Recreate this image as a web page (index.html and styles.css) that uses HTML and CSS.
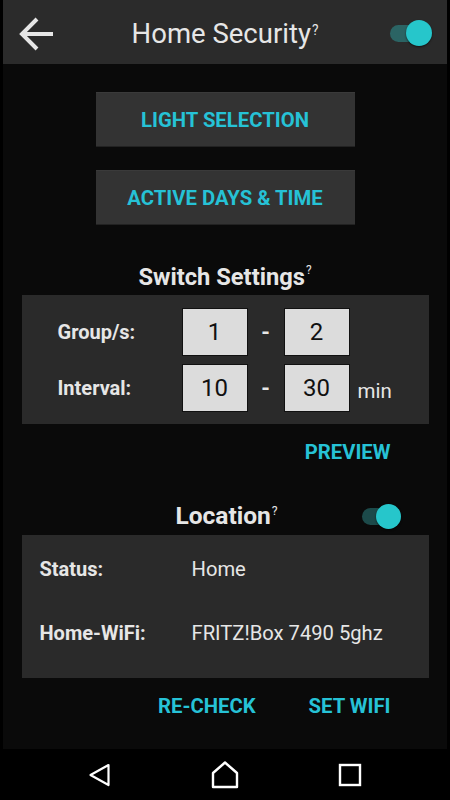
FILE: index.html
```html
<!DOCTYPE html>
<html lang="en">
<head>
    <meta charset="UTF-8">
    <meta name="viewport" content="width=device-width, initial-scale=1.0">
    <title>Home Security</title>
    <link rel="stylesheet" href="styles.css">
</head>
<body>
    <div class="screen">
        <header class="appbar">
            <svg class="back" width="36" height="36" viewBox="0 0 36 36">
                <path d="M35 18H5M19 3L4 18l15 15" fill="none" stroke="#e6e6e6" stroke-width="4"/>
            </svg>
            <h1 class="title">Home Security<sup>?</sup></h1>
            <div class="switch"><span class="thumb"></span></div>
        </header>

        <main class="content">
            <button class="tile">LIGHT SELECTION</button>
            <button class="tile">ACTIVE DAYS &amp; TIME</button>

            <h2 class="section-title">Switch Settings<sup>?</sup></h2>
            <section class="panel settings">
                <div class="row">
                    <span class="label">Group/s:</span>
                    <span class="box">1</span>
                    <span class="dash">-</span>
                    <span class="box">2</span>
                </div>
                <div class="row">
                    <span class="label">Interval:</span>
                    <span class="box">10</span>
                    <span class="dash">-</span>
                    <span class="box">30</span>
                    <span class="unit">min</span>
                </div>
            </section>
            <div class="actions">
                <a class="link">PREVIEW</a>
            </div>

            <div class="location-head">
                <h2 class="section-title">Location<sup>?</sup></h2>
                <div class="switch dim"><span class="thumb"></span></div>
            </div>
            <section class="panel location">
                <div class="info">
                    <span class="label">Status:</span>
                    <span class="value">Home</span>
                </div>
                <div class="info">
                    <span class="label">Home-WiFi:</span>
                    <span class="value">FRITZ!Box 7490 5ghz</span>
                </div>
            </section>
            <div class="actions">
                <a class="link">RE-CHECK</a>
                <a class="link">SET WIFI</a>
            </div>
        </main>
    </div>

    <nav class="navbar">
        <svg width="24" height="24" viewBox="0 0 24 24">
            <path d="M20.5 2L2.5 12l18 10z" fill="none" stroke="#fff" stroke-width="2.2" stroke-linejoin="round"/>
        </svg>
        <svg width="28" height="28" viewBox="0 0 28 28">
            <path d="M2 12L14 1.5 26 12v14H2z" fill="none" stroke="#fff" stroke-width="2.4" stroke-linejoin="round"/>
        </svg>
        <svg width="24" height="24" viewBox="0 0 24 24">
            <rect x="2" y="2" width="20" height="20" fill="none" stroke="#fff" stroke-width="2.4"/>
        </svg>
    </nav>
</body>
</html>
```

FILE: styles.css
```css
body {
    margin: 0;
    background-color: #000;
    font-family: 'Roboto', 'Noto Sans', sans-serif;
    color: #e6e6e6;
    width: 450px;
    height: 800px;
    overflow: hidden;
}

.screen {
    margin: 0 3px;
    height: 749px;
    background-color: #0a0a0a;
    display: flex;
    flex-direction: column;
}

/* top bar */
.appbar {
    height: 64px;
    flex: none;
    background-color: #2b2b2b;
    display: grid;
    grid-template-columns: 1fr auto 1fr;
    align-items: center;
    padding: 0 19px 0 15px;
    box-sizing: border-box;
}

.back {
    margin-top: 1px;
}

.title {
    margin: 0;
    font-size: 27.5px;
    font-weight: 400;
    color: #e6e6e6;
    line-height: 64px;
    padding-top: 2px;
    margin-left: 4px;
}

sup {
    font-size: 0.5em;
    font-weight: 400;
    vertical-align: top;
    line-height: 1;
    position: relative;
    top: 6px;
    margin-left: 1px;
}

.title sup {
    top: 22px;
}

.switch {
    position: relative;
    width: 34px;
    height: 17px;
    border-radius: 9px;
    background-color: #2b6464;
    justify-self: end;
    margin-right: 4px;
}

.switch .thumb {
    position: absolute;
    right: -8px;
    top: -5px;
    width: 26px;
    height: 26px;
    border-radius: 50%;
    background-color: #26c6cb;
    box-shadow: 0 1px 2px rgba(0, 0, 0, 0.6);
}

.switch.dim {
    background-color: #1c4a4a;
    width: 33px;
}

.switch.dim .thumb {
    width: 25px;
    height: 25px;
    right: -6px;
    top: -4px;
}

/* content */
.content {
    flex: 1;
    display: flex;
    flex-direction: column;
    align-items: center;
    padding-top: 28px;
}

.tile {
    width: 259px;
    height: 55px;
    margin-bottom: 23px;
    background-color: #333;
    border: none;
    border-top: 1px solid #3a3a3a;
    border-bottom: 1px solid #222;
    color: #26c2d6;
    font-family: 'Roboto', sans-serif;
    font-weight: 700;
    font-size: 20.3px;
    padding: 0;
}

.section-title {
    margin: 11px 0 0;
    font-size: 23.7px;
    line-height: 36px;
    font-weight: 700;
    color: #e6e6e6;
}

.panel {
    width: 407px;
    background-color: #2a2a2a;
    box-sizing: border-box;
}

.settings {
    padding: 13px 0 12px 36px;
    display: flex;
    flex-direction: column;
    gap: 8px;
}

.row {
    display: flex;
    align-items: center;
}

.label {
    font-weight: 700;
    font-size: 20px;
    color: #e6e6e6;
}

.row .label {
    width: 124px;
}

.box {
    width: 64px;
    height: 46px;
    background-color: #dcdcdc;
    border: 1px solid #111;
    color: #111;
    font-size: 24px;
    display: flex;
    align-items: center;
    justify-content: center;
}

.dash {
    width: 36px;
    text-align: center;
    font-weight: 700;
    font-size: 22px;
}

.unit {
    margin-left: 8px;
    font-size: 20.5px;
    padding-top: 5px;
}

.actions {
    width: 407px;
    display: flex;
    justify-content: flex-end;
    gap: 53px;
    padding-right: 38px;
    box-sizing: border-box;
    margin-top: 17px;
}

.link {
    color: #26c2d6;
    font-weight: 700;
    font-size: 20.3px;
    line-height: 23px;
}

.location-head {
    width: 407px;
    position: relative;
    display: flex;
    justify-content: center;
    margin-top: 37px;
}

.location-head .section-title {
    margin: 0 0 4px;
    line-height: 30px;
    font-size: 24.5px;
    padding-left: 3px;
}

.location-head sup {
    top: 4px;
}

.location-head .switch {
    position: absolute;
    right: 34px;
    top: 7px;
    margin: 0;
}

.location {
    height: 143px;
    padding: 22px 18px 0;
    display: flex;
    flex-direction: column;
    gap: 40px;
}

.info {
    display: flex;
    align-items: center;
    line-height: 24px;
}

.info .label {
    width: 152px;
}

.value {
    font-size: 20.2px;
    color: #e6e6e6;
}

/* system nav */
.navbar {
    height: 51px;
    display: flex;
    align-items: center;
    justify-content: space-between;
    padding: 0 88px;
    box-sizing: border-box;
}
```
